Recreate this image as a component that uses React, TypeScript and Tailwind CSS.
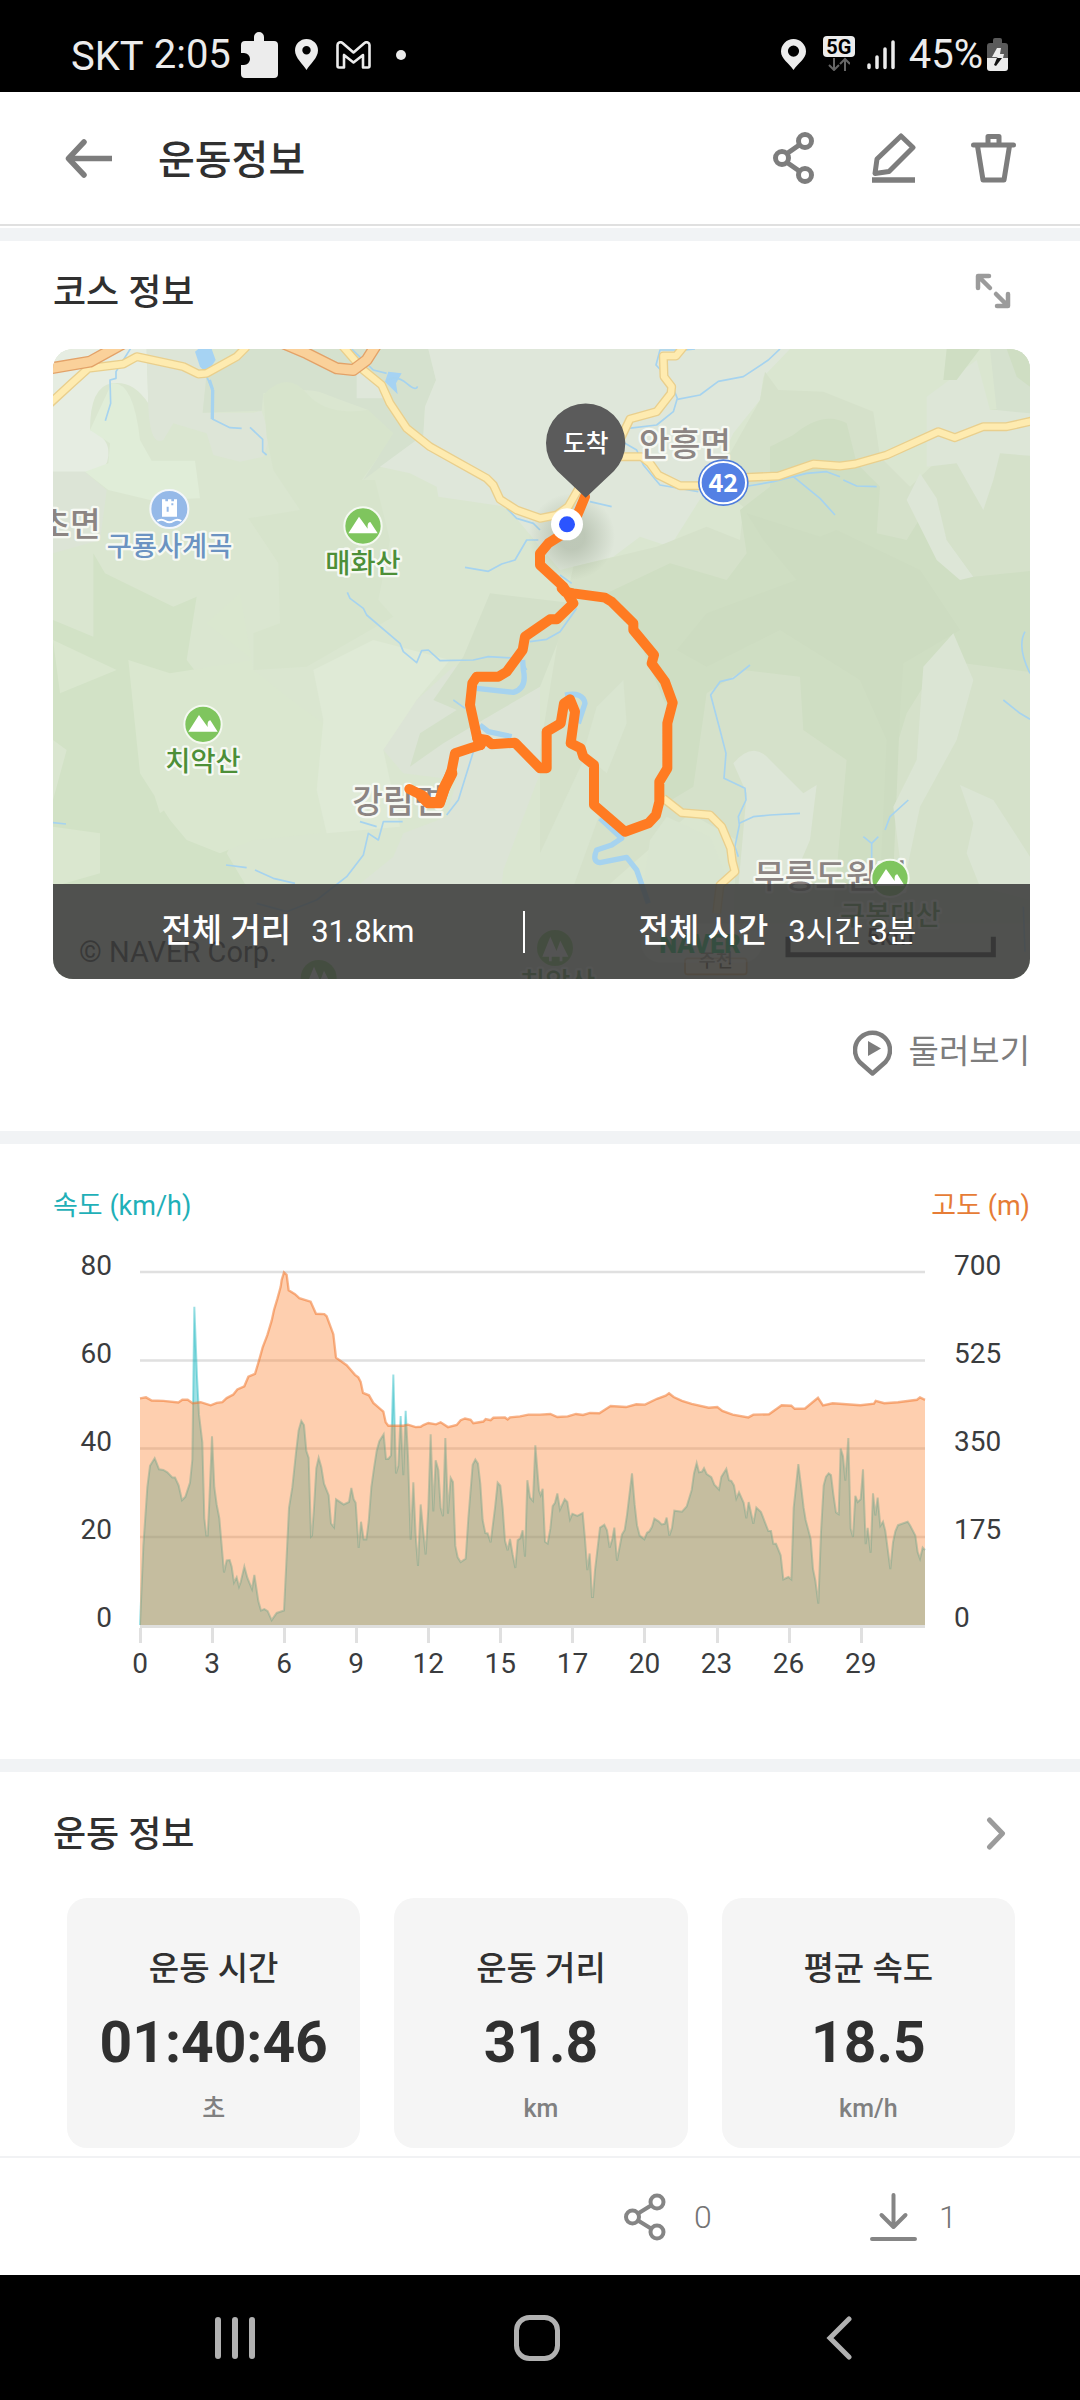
import type { ReactNode } from "react";

type Point = [number, number];

const path = (points: Point[]) => "M" + points.map(([x, y]) => `${x} ${y}`).join("L");

const stretch = (points: Point[]): Point[] =>
  points.map(([x, y]) => [Math.round(1500 + x * 1.033), y]);

const altitude: Point[] = [
  [300, 693], [318, 690], [335, 699], [370, 700], [415, 705], [427, 697], [443, 697], [458, 707], [482, 704],
  [512, 713], [530, 706], [547, 704], [560, 692], [580, 682], [592, 667], [613, 658], [625, 630], [645, 622],
  [658, 580], [668, 545], [682, 510], [695, 468], [702, 437], [712, 405], [722, 370], [725, 350], [732, 328],
  [740, 335], [746, 380], [765, 391], [778, 403], [812, 413], [828, 448], [853, 449], [860, 455], [880, 507],
  [888, 575], [920, 597], [945, 625], [955, 632], [962, 645], [969, 677], [987, 684], [1000, 706], [1030, 731],
  [1037, 762], [1045, 772], [1090, 772], [1104, 769], [1127, 776], [1142, 775], [1150, 770], [1165, 764],
  [1188, 768], [1202, 762], [1224, 776], [1250, 770], [1262, 756], [1275, 751], [1292, 755], [1300, 765],
  [1330, 760], [1337, 753], [1352, 756], [1360, 749], [1395, 748], [1403, 754], [1410, 748], [1440, 745],
  [1465, 740], [1490, 740],
  ...stretch([
    [0, 740], [30, 738], [50, 747], [80, 745], [105, 738], [125, 741], [145, 735], [172, 736], [205, 715],
    [250, 718], [280, 710], [305, 711], [340, 694], [365, 685], [375, 678], [388, 689], [412, 700], [440, 709],
    [490, 720], [515, 718], [530, 729], [560, 740], [605, 748], [620, 740], [665, 739], [702, 713], [730, 714],
    [740, 723], [770, 722], [807, 691], [822, 713], [850, 707], [930, 713], [970, 708], [975, 700], [1000, 707],
    [1040, 704], [1095, 697], [1104, 690], [1118, 697],
  ]),
];

const speed: Point[] = [
  [300, 1349], [310, 1120], [322, 950], [330, 888], [344, 866], [357, 898], [370, 900], [382, 907], [397, 922],
  [405, 922], [416, 945], [426, 988], [436, 978], [450, 937], [457, 870], [463, 428], [471, 630], [477, 740],
  [487, 820], [493, 1040], [499, 1090], [503, 1090], [508, 990], [516, 803], [523, 950], [530, 1000], [538, 1040],
  [552, 1197], [560, 1162], [569, 1161], [575, 1180], [582, 1226], [590, 1211], [597, 1238], [602, 1225],
  [613, 1180], [622, 1212], [636, 1245], [643, 1204], [655, 1280], [663, 1307], [673, 1303], [683, 1309],
  [695, 1335], [710, 1314], [732, 1307], [747, 1010], [757, 950], [768, 850], [776, 785], [784, 758], [792, 770],
  [799, 845], [806, 865], [813, 1093], [816, 1090], [822, 1010], [829, 895], [836, 865], [844, 892], [852, 940],
  [866, 973], [873, 1055], [882, 1066], [888, 985], [911, 1000], [927, 993], [934, 952], [941, 985], [947, 995],
  [956, 1126], [963, 1050], [971, 1101], [979, 1101], [986, 1050], [994, 950], [1002, 895], [1010, 845],
  [1018, 817], [1031, 797], [1038, 868], [1045, 868], [1053, 858], [1060, 624], [1068, 910], [1075, 888],
  [1082, 744], [1090, 915], [1097, 729], [1104, 860], [1112, 1102], [1120, 936], [1127, 1090], [1134, 1178],
  [1142, 1000], [1150, 1080], [1157, 1145], [1165, 1010], [1172, 797], [1180, 1020], [1187, 872], [1195, 900],
  [1202, 1010], [1209, 1034], [1216, 808], [1224, 1027], [1232, 923], [1239, 935], [1246, 1120], [1253, 1153],
  [1262, 1167], [1277, 1157], [1285, 1040], [1298, 885], [1306, 870], [1314, 882], [1321, 940], [1328, 1045],
  [1336, 1083], [1343, 1084], [1352, 1110], [1365, 1010], [1373, 937], [1381, 946], [1388, 1010], [1395, 1105],
  [1403, 1133], [1410, 1100], [1418, 1145], [1426, 1184], [1433, 1103], [1441, 1098], [1448, 1075], [1455, 1151],
  [1462, 930], [1470, 980], [1479, 990], [1486, 829], [1497, 960],
  ...stretch([
    [2, 973], [8, 955], [15, 1108], [22, 1113], [30, 1070], [37, 1005], [44, 995], [50, 968], [58, 1015],
    [72, 985], [79, 993], [87, 1043], [94, 1027], [108, 1033], [124, 1025], [131, 1100], [137, 1190], [144, 1142],
    [151, 1268], [154, 1268], [160, 1190], [174, 1067], [187, 1059], [195, 1075], [202, 1125], [210, 1100],
    [216, 1067], [224, 1163], [238, 1087], [246, 1074], [253, 1030], [267, 910], [275, 1000], [282, 1060],
    [289, 1090], [303, 1101], [311, 1082], [318, 1078], [325, 1065], [332, 1041], [345, 1049], [353, 1058],
    [362, 1056], [368, 1038], [376, 1090], [383, 1068], [390, 1018], [412, 1021], [426, 1006], [440, 958],
    [447, 910], [455, 880], [462, 907], [470, 905], [476, 895], [484, 912], [498, 921], [506, 943], [520, 957],
    [527, 920], [541, 897], [549, 930], [556, 932], [563, 945], [570, 983], [578, 965], [591, 995], [599, 1040],
    [606, 993], [620, 1056], [628, 1009], [642, 1022], [663, 1077], [671, 1077], [678, 1114], [685, 1114],
    [699, 1147], [707, 1217], [721, 1210], [730, 1217], [737, 1010], [750, 883], [758, 945], [766, 1010],
    [772, 1045], [786, 1100], [793, 1187], [800, 1220], [808, 1287], [816, 1080], [824, 945], [831, 920],
    [838, 910], [845, 915], [852, 970], [860, 1023], [867, 1028], [873, 838], [880, 860], [887, 931], [895, 808],
    [902, 1070], [909, 1094], [916, 975], [923, 993], [931, 985], [938, 898], [946, 1115], [952, 1068],
    [960, 1140], [967, 968], [974, 1032], [981, 980], [988, 1062], [996, 1050], [1003, 1077], [1017, 1187],
    [1025, 1110], [1032, 1078], [1040, 1060], [1068, 1050], [1075, 1060], [1090, 1090], [1097, 1138],
    [1104, 1157], [1111, 1125], [1118, 1132],
  ]),
];

const kmTicks = ["0", "3", "6", "9", "12", "15", "17", "20", "23", "26", "29"];

function StatusBar() {
  return (
    <div className="flex h-[92px] items-start bg-black pl-[71px] pr-[72px] pt-8 text-[40px] leading-[46px] text-[#ececec]">
      <span className="pt-[2px]">SKT</span>
      <span className="ml-[10px]">2:05</span>
      <svg className="ml-[10px] h-[46px] w-[37px]" viewBox="0 0 37 46" fill="#ececec" aria-hidden="true">
        <path d="M4 9h9V5a5 5 0 0 1 10 0v4h10a4 4 0 0 1 4 4v29a4 4 0 0 1-4 4H4a4 4 0 0 1-4-4v-9h3a6 6 0 0 0 0-12H0v-8a4 4 0 0 1 4-4z" />
      </svg>
      <svg className="ml-[17px] mt-[7px] h-[31px] w-[23px]" viewBox="0 0 23 31" fill="#ececec" fillRule="evenodd" aria-hidden="true">
        <path d="M11.500 0A11.500 11.500 0 0 0 0 11.500C0 19 8 25 11.500 31C15 25 23 19 23 11.500A11.500 11.500 0 0 0 11.500 0zM11.500 7a4.200 4.200 0 1 1 0 8.400a4.200 4.200 0 0 1 0-8.400z" />
      </svg>
      <svg className="ml-[18px] mt-[9px] h-[28px] w-[35px]" viewBox="0 0 35 28" fill="none" stroke="#ececec" strokeWidth="2.600" strokeLinejoin="round" aria-hidden="true">
        <path d="M1.500 25V4C1.500 1.500 4.500 .5 6.500 2l11 9.500L28.500 2c2-1.500 5-.5 5 2v21c0 1-.5 1.500-1.500 1.500h-5V14l-9.500 7.500L8 14v12.500H3c-1 0-1.500-.5-1.500-1.500z" />
      </svg>
      <span className="ml-[25px] mt-[18px] size-[10px] rounded-full bg-[#ececec]" />

      <svg className="ml-auto mt-[7px] h-[31px] w-[25px]" viewBox="0 0 25 31" fill="#ececec" fillRule="evenodd" aria-hidden="true">
        <path d="M12.500 0A12.500 12.500 0 0 0 0 12.500C0 20 8 24 12.500 31C17 24 25 20 25 12.500A12.500 12.500 0 0 0 12.500 0zM12.500 6.500a5.600 5.600 0 1 1 0 11.200a5.600 5.600 0 0 1 0-11.200z" />
      </svg>
      <div className="ml-[17px] mt-1 flex w-[32px] flex-col items-center">
        <span className="flex h-[21px] w-full items-center justify-center rounded-[4px] bg-[#ececec] text-[20px] font-bold leading-none text-black">
          5G
        </span>
        <svg className="h-[14px] w-[22px]" viewBox="0 0 22 14" fill="none" stroke="#666" strokeWidth="2" aria-hidden="true">
          <path d="M6 1v11.500M1 8l5 5 5-5M17 14V2M12 7l5-5 5 5" />
        </svg>
      </div>
      <svg className="ml-[12px] mt-[8px] h-[30px] w-[28px]" viewBox="0 0 28 30" stroke="#ececec" strokeWidth="3.500" strokeLinecap="round" aria-hidden="true">
        <path d="M2 25v2.500M10 17v10.500M18 9v18.500M26 2v25.500" />
      </svg>
      <span className="ml-[14px]">45%</span>
      <svg className="ml-[4px] mt-[6px] h-[33px] w-[21px]" viewBox="0 0 21 33" aria-hidden="true">
        <path d="M6 5V2q0-2 2-2h5q2 0 2 2v3h3q3 0 3 3v12H0V8q0-3 3-3z" fill="#5a5a5a" />
        <path d="M0 20h21v10q0 3-3 3H3q-3 0-3-3z" fill="#ececec" />
        <path d="M10 10 5 19h6l-1.500 1H16l1-4h-4l1-6z" fill="#ececec" />
        <path d="M10 20h5l-6 8-2-1z" fill="#111" />
      </svg>
    </div>
  );
}

function IconButton({ label, className, children }: { label: string; className?: string; children: ReactNode }) {
  return (
    <button type="button" aria-label={label} className={className}>
      {children}
    </button>
  );
}

function TopBar() {
  return (
    <header className="flex h-[134px] items-center border-b-2 border-[#e0e0e0] pl-[65px] pr-[64px]">
      <IconButton label="뒤로">
        <svg className="h-[39px] w-[48px]" viewBox="0 0 48 39" fill="none" stroke="#7d7d7d" strokeWidth="5.500">
          <path d="M19 3 3.500 19.500 19 36" strokeLinecap="round" strokeLinejoin="round" />
          <path d="M4 19.500h43" />
        </svg>
      </IconButton>
      <h1 className="ml-[45px] mt-[6px] text-[40px] font-medium leading-[56px] text-[#303030]">운동정보</h1>
      <IconButton label="공유" className="ml-auto">
        <svg className="h-[52px] w-[42px]" viewBox="0 0 42 52" fill="none" stroke="#7d7d7d" strokeWidth="5">
          <circle cx="9" cy="26" r="6.500" />
          <circle cx="32" cy="9" r="6.500" />
          <circle cx="32" cy="43" r="6.500" />
          <path d="M14 21.500 27 12.500M14 30.500 27 39.500" />
        </svg>
      </IconButton>
      <IconButton label="편집" className="ml-[57px]">
        <svg className="h-[52px] w-[44px]" viewBox="0 0 44 52" fill="none" stroke="#7d7d7d" strokeWidth="5" strokeLinejoin="round">
          <path d="M29 4 41 15.500 17 39.500 3 41.500 5 27z" />
          <path d="M0 48h43" strokeWidth="5.500" />
        </svg>
      </IconButton>
      <IconButton label="삭제" className="ml-[55px]">
        <svg className="h-[52px] w-[45px]" viewBox="0 0 45 52" fill="none" stroke="#7d7d7d" strokeWidth="5" strokeLinecap="round" strokeLinejoin="round">
          <path d="M2.500 13h40M17 12V4.500h11V12M6.500 14 12 48h21l5.500-34" />
        </svg>
      </IconButton>
    </header>
  );
}

function Mountain({ x, y }: { x: number; y: number }) {
  return (
    <g transform={`translate(${x} ${y})`}>
      <circle r="56" fill="#7fc55e" stroke="#f4f9f0" strokeWidth="6" />
      <path d="M-44 22-12-28 14 8Q12-12 22-12L44 22Z" fill="#fff" />
    </g>
  );
}

function Pine({ x, y }: { x: number; y: number }) {
  return (
    <g transform={`translate(${x} ${y})`}>
      <circle r="54" fill="#7fc55e" />
      <path d="M-14-34-38 26h20v14h8V26H12ZM16-22-2 26h16v14h8V26h18Z" fill="#fff" />
    </g>
  );
}

const riverPaths = [
  "M272 25 228 95 228 115 210 120 212 190 196 242",
  "M935 27 1000 90 1040 100",
  "M1040 120Q1070 105 1100 130T1132 139",
  "M500 110 518 150 517 237 570 263 605 265M630 262 668 298 668 335 680 345",
  "M1400 505 1430 535 1480 550 1500 570M1495 600 1460 600 1425 660 1385 672 1345 694 1275 682",
  "M922 757 930 775 970 805 980 825 1080 910 1090 935 1130 968 1145 932 1165 930 1200 962 1300 960 1345 950 1440 955 1460 990",
  "M1965 27 1935 30 1860 30 1848 75 1890 120 1912 175 1900 215 1850 255 1765 265",
  "M2220 27 2185 60 2110 110 2035 124 1980 165 1912 178",
  "M1755 310 1790 330 1810 375 1860 435 1975 455M2125 438 2200 425 2300 400 2360 395 2400 410M2410 420 2450 438 2510 440",
  "M2260 410 2340 475 2385 525M1650 485 1715 500",
  "M1560 705 1595 730M1610 805 1560 875 1520 898 1470 905",
  "M1240 1080 1275 1105M1300 1235 1255 1380 1220 1425M1088 1445 1030 1445 1015 1500 985 1480 970 1545 920 1610 830 1680 740 1715 650 1690",
  "M960 1445 1010 1460M558 1575 620 1583M645 1590 700 1615 765 1630M39 1448 78 1452",
  "M2955 1835 2950 1700M2955 875Q2930 920 2970 1000M2890 1080 2940 1120 2970 1138",
  "M2130 975 2080 1015 2040 1025 2012 1065 2040 1170 2058 1240 2052 1315 2115 1345 2118 1380 2095 1430 2098 1455 2085 1520 2095 1550",
  "M2098 1450 2140 1430 2190 1425 2280 1420M2605 1380 2550 1430 2535 1470M2470 1490 2495 1510 2515 1490M2495 1510V1560",
];

const wideRivers = [
  "M1310 1045 1420 1057Q1462 1045 1450 990L1448 960",
  "M1320 1155 1345 1175 1415 1190",
  "M1575 1065Q1630 1055 1635 1090L1615 1150M1680 1435 1745 1495 1715 1515 1670 1530Q1655 1565 1680 1568L1760 1552 1790 1590 1825 1690",
];

const yellowRoads = [
  "M30 190 95 130 145 85 250 72 290 50 430 80 475 102 500 100 590 50 620 20",
  "M905 15 970 90 1025 135 1050 190 1100 265 1170 320 1340 415 1360 435 1380 478 1430 510 1500 535 1550 525 1585 500 1625 430",
  "M1935 15 1908 48 1870 48 1872 110 1895 140 1893 160 1850 215 1770 237 1740 300",
  "M1700 350 1805 350 1830 370 1855 405 1920 437 2000 437M2100 413 2215 408 2320 372 2400 378 2445 372 2540 345 2695 275 2745 293 2830 260 2900 260 2990 240",
  "M1870 1375 1925 1418 2010 1425 2045 1460 2072 1525 2077 1565 2085 1595 2040 1635 2030 1720",
];

const highways = ["M20 87 150 65 250 10", "M730 10 800 40 890 85 940 90 980 60 1015 5"];

const track =
  "M1635 470 1610 530 1580 575 1525 610 1500 640 1500 675 1570 740 1600 790 1550 838 1530 838 1455 890 1448 930 1400 995 1375 1010 1310 1010 1297 1030 1290 1095 1312 1195 1322 1215 1290 1225 1245 1240 1235 1290 1220 1330 1200 1385 1165 1388 1150 1368 1108 1347";
const loop =
  "M1565 745 1575 755 1600 760 1695 773 1715 785 1780 850 1780 870 1842 945 1835 970 1875 1025 1898 1088 1882 1150 1882 1285 1858 1325 1858 1385 1848 1425 1825 1450 1755 1475 1662 1395 1662 1275 1630 1250 1622 1225 1592 1210 1605 1115 1590 1078 1572 1090 1562 1150 1520 1175 1520 1285 1500 1285 1425 1208 1355 1213 1340 1200 1312 1195 1322 1215";

function CourseMap() {
  return (
    <svg
      className="absolute inset-0 size-full font-['Noto_Sans_CJK_KR',sans-serif] font-medium"
      viewBox="39 27 2931 1890"
      preserveAspectRatio="xMidYMid slice"
      role="img"
      aria-label="코스 지도"
    >
      <defs>
        <radialGradient id="marker-shade">
          <stop offset="0.300" stopColor="#5f6f55" stopOpacity="0.260" />
          <stop offset="1" stopColor="#5f6f55" stopOpacity="0" />
        </radialGradient>
      </defs>
      <rect x="0" y="0" width="3000" height="1950" fill="#dae6d0" />
      <path d="M39 27H320L325 190Q280 120 215 130T150 270Q200 290 205 330T180 395H39Z" fill="#e6ede2" />
      <path d="M320 27H500V110L488 218H640L665 212 690 290 670 350 600 365 520 345 500 280 400 250 370 300Q330 320 325 200Z" fill="#dde5d7" />
      <path d="M39 395H135L200 450 180 600 39 640Z" fill="#dce4d6" />
      <path d="M215 130Q280 120 300 300L335 362H465L480 475 330 480 205 450 135 395 205 370 210 310 150 270Z" fill="#e0edd8" />
      <path d="M600 27H1165L1188 120 1155 200 1150 285 970 420 1015 350 985 210Q900 180 850 160T670 160L665 212 488 218 500 100Z" fill="#d5e1ce" />
      <path d="M670 165Q740 90 800 160T985 210L1060 280 1015 350 965 420H1005L1050 600 1015 780 1060 830 800 980 640 990 640 880 720 850 715 670 625 535 780 510 700 390 680 290Z" fill="#d7e4cc" />
      <path d="M950 90 1020 130 1040 175H950ZM1165 27H2250L2170 110 2160 180 2080 280 2010 430 1890 620 1800 590 1720 650 1560 690 1500 620 1400 500 1195 470 1190 440 1110 400 1020 380 1150 285 1155 200 1188 120Z" fill="#dfe7da" />
      <path d="M160 640 195 700 400 800 470 770 440 960 540 1090 600 1020 700 1100 780 1340 640 1400 560 1540 620 1640H39V1380L80 1230 39 1200V840L160 890Z" fill="#d2e2c6" />
      <path d="M300 1075 380 1045 430 1080 470 1340 360 1420 310 1260ZM39 900 230 990 60 1060ZM39 1460 180 1480 180 1600 39 1640ZM265 960 390 1000 640 960 500 850 600 760 640 990 780 1100 850 1150 840 1480 640 1500 540 1540 440 1500 390 1440 300 1300Z" fill="#dae7cf" />
      <path d="M820 990 1000 900 1230 960 1130 1080 1090 1160 1030 1230 1080 1460 860 1480 830 1350 850 1140Z" fill="#dfead6" />
      <path d="M1130 1080 1240 980 1500 930 1500 1300 1390 1590 1380 1680H900L1060 1550 1090 1480 1220 1430 1250 1320 1090 1300 1030 1230Z" fill="#dce4d6" />
      <path d="M1350 760 1600 790 1500 1040 1380 1110 1210 1210 1110 1280 1140 1180 1250 1110 1180 1080 1270 950Z" fill="#d3e0c9" />
      <path d="M2160 180 2175 95 2215 150 2350 155 2500 215 2520 350 2610 440 2850 210 3000 190V1750H2080L2090 1500 1950 1420 1700 1640 1500 1640V1230L1560 860 1600 680 1850 620 2000 560 2100 600 2110 500 2020 430Z" fill="#d5e1ca" />
      <path d="M2260 285Q2350 210 2420 250L2450 370 2520 440 2510 580 2600 600 2680 470 2720 600 2800 710 3000 690V1000L2700 960 2600 1120 2560 1250 2550 1700H2380L2420 1260 2290 1170 2280 1010 2110 990 2000 1060 1960 1340 1860 1400 1880 1100 1780 860 1700 760 1890 670 2060 720 2120 640 2100 510 2190 440 2190 320Z" fill="#cfdec3" />
      <path d="M2120 520 2340 590 2390 570 2640 690 2760 870 2590 970 2580 1120 2560 1600 2520 1640 2540 1200 2460 1020 2220 870 2000 980 1910 930 2000 820 2270 720 2170 600Z" fill="#cddcc1" />
      <path d="M2600 480 2640 400 2690 475 2720 600 2800 710 2760 720 2690 660ZM2660 170 2810 60 2850 210H3000V350L2880 340 2860 420 2830 510 2750 370 2660 380Z" fill="#dde6d7" />
      <path d="M2710 27H2850L2870 210 2970 220V27Z" fill="#d5e1ce" />
      <path d="M2720 27H2820L2750 120H2710ZM2900 27H2970V140L2930 110Z" fill="#cfdec3" />
      <path d="M2080 1270Q2140 1200 2190 1260L2290 1360 2330 1335 2310 1500 2250 1640H2095L2120 1360Z" fill="#dde6d7" />
      <path d="M2760 1335 2860 1380 2970 1550V1680L2820 1640 2780 1540 2800 1450ZM2650 980 2740 880 2800 1020 2750 1200 2640 1400 2590 1640 2560 1400 2630 1260Z" fill="#dbe5d4" />
      <path d="M1670 1100 1750 1020 1760 1150 1700 1300 1630 1240ZM1500 1640V1540L1640 1240 1680 1420 1600 1640ZM1830 1500 1880 1430 2010 1490 2070 1640H1810Z" fill="#d9e5d0" />
      <path d="M465 35 475 27H515L527 60 500 100 480 80ZM1045 95 1085 100 1068 130 1073 163 1035 125Z" fill="#a6d3f3" />

      <g fill="none" stroke="#a6d3ef" strokeLinejoin="round">
        {riverPaths.map((d) => (
          <path key={d} d={d} strokeWidth="5" />
        ))}
        {wideRivers.map((d) => (
          <path key={d} d={d} strokeWidth="16" />
        ))}
        <path d="M518 150 517 237M508 120 518 150" strokeWidth="10" />
      </g>
      <circle cx="1595" cy="590" r="130" fill="url(#marker-shade)" />

      <g fill="none" strokeLinejoin="round">
        {yellowRoads.map((d) => (
          <path key={d} d={d} stroke="#e9cf8d" strokeWidth="27" />
        ))}
        {yellowRoads.map((d) => (
          <path key={d} d={d} stroke="#feebb0" strokeWidth="19" />
        ))}
        {highways.map((d) => (
          <path key={d} d={d} stroke="#e3a268" strokeWidth="36" />
        ))}
        {highways.map((d) => (
          <path key={d} d={d} stroke="#fad19a" strokeWidth="28" />
        ))}
      </g>

      <g strokeLinejoin="round" paintOrder="stroke" stroke="#f6f9f3" strokeWidth="14">
        <g fill="#8c8583" fontSize="100">
          <text x="-2" y="589">초면</text>
          <text x="1797" y="347">안흥면</text>
          <text x="937" y="1419">강림면</text>
          <text x="2142" y="1643">무릉도원면</text>
        </g>
        <g fill="#4d8f38" fontSize="82">
          <text x="856" y="700">매화산</text>
          <text x="376" y="1293">치악산</text>
          <text x="2400" y="1755">구봉대산</text>
          <text x="1440" y="1955">치악산</text>
        </g>
        <text x="200" y="648" fill="#6b93c2" fontSize="82">구룡사계곡</text>
      </g>
      <Mountain x={969} y={558} />
      <Mountain x={489} y={1153} />
      <Mountain x={2550} y={1615} />
      <Pine x={836} y={1914} />
      <Pine x={1545} y={1824} />
      <circle cx="388" cy="507" r="57" fill="#95b9e8" stroke="#f3f7fb" strokeWidth="6" />
      <path d="M366 478h10v6h8v-6h10v6h8v-6h9v52h-45zM380 500v15h6v-15zM400 490v6h-6v-6z" fill="#fff" fillRule="evenodd" />
      <path d="M352 543q12-8 24 0t24 0 24 0" fill="none" stroke="#fff" strokeWidth="6" />

      <ellipse cx="2050" cy="428" rx="76" ry="70" fill="#4f7ddc" />
      <ellipse cx="2050" cy="428" rx="68" ry="62" fill="#5480e4" stroke="#fff" strokeWidth="6" />
      <text x="2050" y="456" textAnchor="middle" fill="#fff" fontSize="76" className="font-bold">42</text>

      <path d={track} fill="none" stroke="#ff7b22" strokeWidth="30" strokeLinecap="round" strokeLinejoin="round" />
      <path d={loop} fill="none" stroke="#ff7b22" strokeWidth="30" strokeLinecap="round" strokeLinejoin="round" />
      <path d="M1235 1300 1212 1345 1198 1388H1165L1145 1368" fill="none" stroke="#ff7b22" strokeWidth="34" strokeLinecap="round" strokeLinejoin="round" />
      <path d="M1637 473 1552 393A119 119 0 1 1 1722 393Z" fill="#5b5b5b" />
      <text x="1637" y="335" textAnchor="middle" fill="#fff" fontSize="74">도착</text>
      <circle cx="1581" cy="553" r="48" fill="#fff" />
      <circle cx="1581" cy="553" r="24" fill="#2b54ff" />

      <text x="117" y="1865" fill="#1a1a1a" fontSize="87" className="font-['Roboto',sans-serif] font-normal">© NAVER Corp.</text>
      <rect x="1935" y="1855" width="185" height="48" rx="8" fill="#fff3d6" stroke="#d8a860" strokeWidth="5" />
      <text x="2027" y="1882" textAnchor="middle" fill="#4a3a1a" fontSize="56">주천</text>
      <rect x="1803" y="1750" width="364" height="118" rx="59" fill="#fff" fillOpacity="0.400" />
      <text x="1980" y="1838" textAnchor="middle" fill="#03c75a" fontSize="76" className="font-['Roboto',sans-serif] font-black">NAVER</text>
      <text x="2550" y="1815" textAnchor="middle" fill="#111" fontSize="72" className="font-['Roboto',sans-serif]">5km</text>
      <path d="M2244 1790v54h616v-54" fill="none" stroke="#111" strokeWidth="15" />
    </svg>
  );
}

function Metric({ label, value }: { label: string; value: string }) {
  return (
    <div className="flex items-baseline justify-center gap-[20px] whitespace-nowrap">
      <dt className="text-[33px] font-medium leading-[44px]">{label}</dt>
      <dd className="text-[31px] leading-[44px]">{value}</dd>
    </div>
  );
}

function CourseSection() {
  return (
    <section className="pl-[53px] pr-[50px]">
      <div className="flex h-[100px] items-center justify-between pr-[19px]">
        <h2 className="mt-1 text-[36px] font-medium leading-[48px] text-[#303030]">코스 정보</h2>
        <IconButton label="지도 확대">
          <svg className="size-[36px]" viewBox="0 0 36 36" fill="none" stroke="#9b9b9b" strokeWidth="4.500" strokeLinecap="round" strokeLinejoin="round">
            <path d="M3 15V3h11M4 4l11 11M33 21v12H22M32 32 21 21" />
          </svg>
        </IconButton>
      </div>
      <div className="relative mt-2 flex aspect-[977/630] flex-col justify-end overflow-hidden rounded-[20px]">
        <CourseMap />
        <dl className="relative grid h-[95px] grid-cols-[470fr_2px_505fr] items-center bg-[#3c3c3c]/88 text-white">
          <Metric label="전체 거리" value="31.8km" />
          <div className="h-[42px] bg-white" />
          <Metric label="전체 시간" value="3시간 3분" />
        </dl>
      </div>
      <div className="flex justify-end pb-[6px]">
        <button type="button" className="flex h-[146px] items-center gap-[17px] text-[33px] text-[#7d7d7d]">
          <svg className="h-[47px] w-[39px]" viewBox="0 0 39 47" aria-hidden="true">
            <path d="M6.500 33A17.500 17.500 0 1 1 32.500 33L19.500 44.500Z" fill="none" stroke="#7d7d7d" strokeWidth="4.500" strokeLinejoin="round" />
            <path d="M15 12v15l13-7.500z" fill="#7d7d7d" />
          </svg>
          둘러보기
        </button>
      </div>
    </section>
  );
}

function AxisLabels({ values, className }: { values: string[]; className: string }) {
  return (
    <div className={`flex h-[392px] flex-col justify-between text-[28px] leading-[40px] text-[#3a3c3e] ${className}`}>
      {values.map((v) => (
        <span key={v}>{v}</span>
      ))}
    </div>
  );
}

function ChartSection() {
  return (
    <section className="pb-[75px] pl-[53px] pr-[50px] pt-[40px]">
      <div className="flex h-[44px] items-center justify-between text-[27px]">
        <span className="text-[#1fb0b8]">속도 (km/h)</span>
        <span className="text-[#e67c36]">고도 (m)</span>
      </div>
      <div className="mt-[18px] flex items-start">
        <AxisLabels values={["80", "60", "40", "20", "0"]} className="mr-[28px] w-[59px] text-right" />
        <div className="min-w-0 flex-1 pt-[26px]">
          <svg className="block h-[353px] w-full overflow-visible" viewBox="300 327 2355 1022" preserveAspectRatio="none" role="img" aria-label="속도 및 고도 그래프">
            <path d="M300 327H2655M300 583H2655M300 838H2655M300 1094H2655" stroke="#e0e0e0" strokeWidth="7" />
            <path d={path(speed) + "V1349H300Z"} fill="#12b4be" fillOpacity="0.400" />
            <path d={path(speed)} fill="none" stroke="#12b4be" strokeOpacity="0.420" strokeWidth="6" />
            <path d={path(altitude) + "V1349H300Z"} fill="#fc8737" fillOpacity="0.400" />
            <path d={path(altitude)} fill="none" stroke="#f07830" strokeOpacity="0.550" strokeWidth="7" />
          </svg>
          <div className="h-[3px] bg-[#dfdfdd]" />
          <div className="flex">
            {kmTicks.map((km) => (
              <div key={km} className="flex w-[9.18%] shrink-0 flex-col">
                <span className="-ml-px h-[15px] w-[3px] bg-[#e0e0e0]" />
                <span className="flex w-0 justify-center pt-px text-[28px] leading-[40px] text-[#3a3c3e]">{km}</span>
              </div>
            ))}
          </div>
        </div>
        <AxisLabels values={["700", "525", "350", "175", "0"]} className="w-[105px] pl-[29px]" />
      </div>
    </section>
  );
}

const stats = [
  { title: "운동 시간", value: "01:40:46", unit: "초" },
  { title: "운동 거리", value: "31.8", unit: "km" },
  { title: "평균 속도", value: "18.5", unit: "km/h" },
];

function StatsSection() {
  return (
    <section className="pb-[8px]">
      <div className="flex h-[122px] items-center justify-between pl-[53px] pr-[74px]">
        <h2 className="mt-1 text-[36px] font-medium leading-[48px] text-[#303030]">운동 정보</h2>
        <IconButton label="운동 정보 더보기">
          <svg className="h-[33px] w-[20px]" viewBox="0 0 20 33" fill="none" stroke="#9b9b9b" strokeWidth="5" strokeLinecap="round" strokeLinejoin="round">
            <path d="M3.500 3 16.500 16.500 3.500 30" />
          </svg>
        </IconButton>
      </div>
      <div className="mt-1 grid grid-cols-3 gap-[34px] pl-[67px] pr-[65px]">
        {stats.map((s) => (
          <div key={s.title} className="flex h-[250px] flex-col items-center rounded-[20px] bg-[#f5f5f5] pt-[47px]">
            <h3 className="text-[33px] font-medium leading-[48px] text-[#303030]">{s.title}</h3>
            <p className="mt-[18px] text-[57px] font-bold leading-[64px] text-[#303030]">{s.value}</p>
            <p className="mt-[14px] text-[25px] font-medium leading-[40px] text-[#808080]">{s.unit}</p>
          </div>
        ))}
      </div>
    </section>
  );
}

function ActionBar() {
  return (
    <footer className="flex h-[119px] items-center border-t-2 border-[#f1f2f4] text-[32px] font-light text-[#747474]">
      <button type="button" aria-label="공유 0" className="ml-auto flex w-[160px] items-center gap-[28px]">
        <svg className="h-[48px] w-[42px]" viewBox="0 0 42 48" fill="none" stroke="#858585" strokeWidth="4">
          <circle cx="8.500" cy="24" r="6.500" />
          <circle cx="33" cy="9" r="6.500" />
          <circle cx="33" cy="39" r="6.500" />
          <path d="M14 20.500 27 12.500M14 27.500 27 35.500" />
        </svg>
        0
      </button>
      <button type="button" aria-label="다운로드 1" className="ml-[86px] mr-[50px] flex w-[160px] items-center gap-[22px]">
        <svg className="h-[48px] w-[47px]" viewBox="0 0 47 48" fill="none" stroke="#858585" strokeWidth="4" strokeLinecap="round" strokeLinejoin="round">
          <path d="M23.500 2v32M11.500 22l12 12 12-12M2 46h43" />
        </svg>
        1
      </button>
    </footer>
  );
}

function SystemNav() {
  return (
    <nav className="grid h-[126px] grid-cols-3 items-center bg-black pl-[84px] pr-[90px]">
      <IconButton label="최근 앱" className="flex justify-center">
        <svg className="h-[44px] w-[42px]" viewBox="0 0 42 44" stroke="#b1b1b1" strokeWidth="6" strokeLinecap="round">
          <path d="M4 4v36M21 4v36M38 4v36" />
        </svg>
      </IconButton>
      <IconButton label="홈" className="flex justify-center">
        <svg className="size-[46px]" viewBox="0 0 46 46" fill="none" stroke="#b1b1b1" strokeWidth="5">
          <rect x="2.500" y="2.500" width="41" height="41" rx="13" />
        </svg>
      </IconButton>
      <IconButton label="뒤로 가기" className="flex justify-center">
        <svg className="h-[44px] w-[26px]" viewBox="0 0 26 44" fill="none" stroke="#b1b1b1" strokeWidth="5" strokeLinecap="round">
          <path d="M23 3 4 22l19 19" />
        </svg>
      </IconButton>
    </nav>
  );
}

export default function App() {
  return (
    <div className="flex min-h-screen flex-col bg-white font-['Roboto','Noto_Sans_CJK_KR',sans-serif]">
      <StatusBar />
      <TopBar />
      <main className="flex-1">
        <div className="mt-[2px] h-[13px] bg-[#f1f3f5]" />
        <CourseSection />
        <div className="h-[13px] bg-[#f1f3f5]" />
        <ChartSection />
        <div className="h-[13px] bg-[#f1f3f5]" />
        <StatsSection />
      </main>
      <ActionBar />
      <SystemNav />
    </div>
  );
}
